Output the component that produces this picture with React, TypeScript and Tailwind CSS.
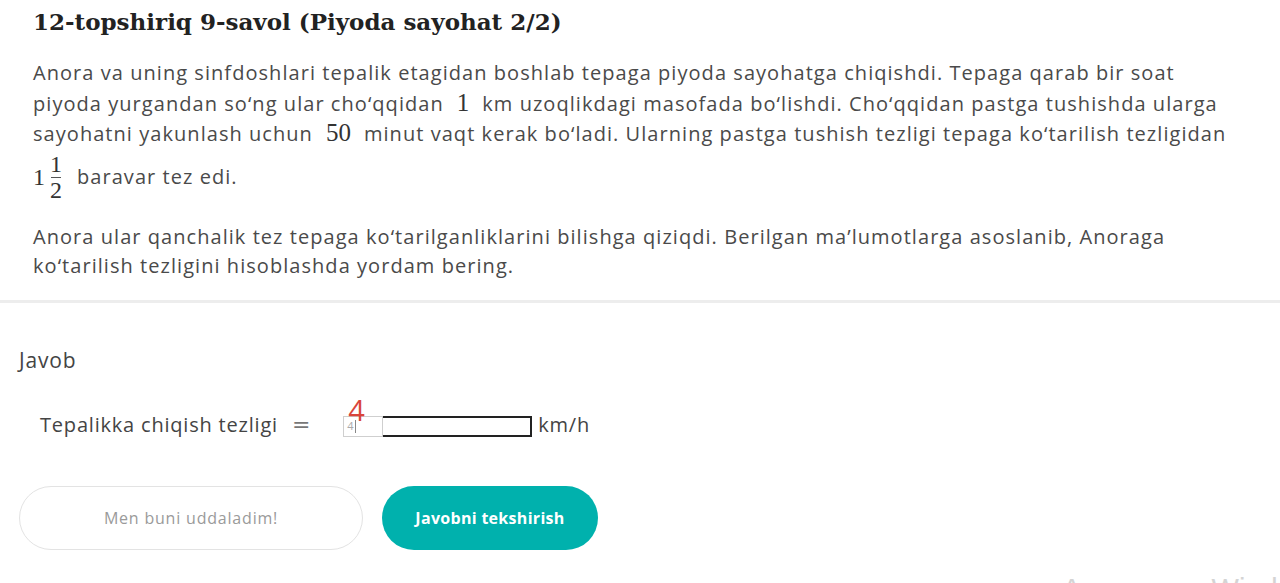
import React from "react";

const MathNum = ({ children }: { children: React.ReactNode }) => (
	<span className="font-['Liberation_Serif',serif] text-[25px] tracking-normal text-[#333] mx-[13px]">{children}</span>
);

export default function App() {
	return (
		<div className="relative w-[1280px] h-[583px] overflow-hidden bg-white font-['Open_Sans',sans-serif]">
			{/* QUESTION */}
			<div className="px-[33px] pt-[6px]">
				<h1 className="font-['DejaVu_Serif',serif] font-bold text-[23px] text-[#222] leading-[32px]">
					12-topshiriq 9-savol (Piyoda sayohat 2/2)
				</h1>

				<div className="mt-[20px] text-[20px] tracking-[1.05px] text-[#4a4a4a]">
					<p className="leading-[29.5px] whitespace-nowrap">
						Anora va uning sinfdoshlari tepalik etagidan boshlab tepaga piyoda sayohatga chiqishdi. Tepaga qarab bir soat
						<br />
						piyoda yurgandan so‘ng ular cho‘qqidan<MathNum>1</MathNum>km uzoqlikdagi masofada bo‘lishdi. Cho‘qqidan pastga tushishda ularga
						<br />
						sayohatni yakunlash uchun<MathNum>50</MathNum>minut vaqt kerak bo‘ladi. Ularning pastga tushish tezligi tepaga ko‘tarilish tezligidan
					</p>
					<div className="flex h-[57px] items-center">
						<span className="font-['Liberation_Serif',serif] text-[24px] tracking-normal text-[#333]">1</span>
						<span className="ml-[5px] flex flex-col items-center font-['Liberation_Serif',serif] text-[24px] leading-[19px] tracking-normal text-[#333]">
							<span>1</span>
							<span className="my-[3px] h-[1px] w-[10px] bg-[#555]" />
							<span>2</span>
						</span>
						<span className="ml-[15px]">baravar tez edi.</span>
					</div>

					<p className="mt-[16px] leading-[29.5px] whitespace-nowrap">
						Anora ular qanchalik tez tepaga ko‘tarilganliklarini bilishga qiziqdi. Berilgan ma’lumotlarga asoslanib, Anoraga
						<br />
						ko‘tarilish tezligini hisoblashda yordam bering.
					</p>
				</div>
			</div>

			<div className="mt-[19px] h-[3px] w-full bg-[#ededed]" />

			{/* ANSWER */}
			<div className="px-[19px] pt-[43px]">
				<div className="text-[21px] leading-[28px] tracking-[0.8px] text-[#444]">Javob</div>

				<div className="mt-[37px] ml-[21px] flex h-[28px] items-center text-[20px] tracking-[0.8px] text-[#444]">
					<span>Tepalikka chiqish tezligi</span>
					<span className="ml-[14px] font-['DejaVu_Sans',sans-serif] text-[22px] text-[#777]">=</span>
					<div className="relative ml-[32px] mt-[4px] flex h-[21px] w-[189px]">
						<div className="flex w-[40px] items-center border border-[#cfcfcf] pl-[3px] text-[11px] text-[#aaa]">
							4<span className="ml-[1px] h-[13px] w-[1px] bg-[#888]" />
						</div>
						<div className="flex-1 border-2 border-l-0 border-[#222]" />
						<span className="absolute left-[5px] top-[-21px] text-[29px] leading-none tracking-normal text-[#d9453b]">4</span>
					</div>
					<span className="ml-[6px]">km/h</span>
				</div>

				<div className="mt-[47px] flex gap-[19px]">
					<button className="h-[64px] w-[344px] rounded-full border border-[#e3e3e3] bg-white text-[16px] tracking-[0.8px] text-[#9a9a9a]">
						Men buni uddaladim!
					</button>
					<button className="h-[64px] w-[216px] rounded-full bg-[#00b1ad] text-[16px] font-bold tracking-[0.3px] text-white">
						Javobni tekshirish
					</button>
				</div>
			</div>

			{/* WATERMARK */}
			<span className="pointer-events-none absolute left-[1062px] top-[571px] whitespace-nowrap text-[29px] leading-[36px] text-[#d4d4d4] font-['Liberation_Sans',sans-serif]">
				Активация Windows
			</span>
		</div>
	);
}
